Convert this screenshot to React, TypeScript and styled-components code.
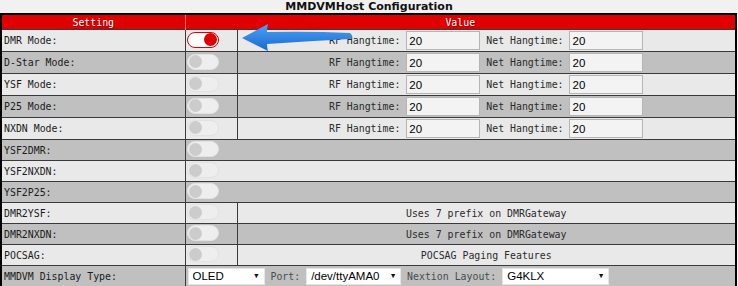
import React from "react";
import styled, { createGlobalStyle } from "styled-components";

const GlobalStyle = createGlobalStyle`
  html, body {
    margin: 0;
    padding: 0;
    background: #f1f1f1;
  }
  body {
    font-family: "DejaVu Sans Mono", monospace;
  }
`;

const Page = styled.div`
  position: relative;
  width: 738px;
  height: 286px;
  overflow: hidden;
`;

const Title = styled.div`
  font-family: "DejaVu Sans", Verdana, sans-serif;
  font-weight: bold;
  font-size: 11px;
  line-height: 13px;
  text-align: center;
  color: #111;
`;

const Table = styled.table`
  width: 737px;
  border-collapse: collapse;
  table-layout: fixed;
  border: 2px solid #000;
  font-size: 9.9px;
  color: #1b1b1b;
`;

const HeadCell = styled.th`
  background: #e10000;
  color: #fff;
  font-weight: normal;
  height: 14px;
  padding: 0;
  text-shadow: 1px 1px 1px #8a0000;
  border-right: 1px solid #f07070;
`;

const Row = styled.tr<{ $dark?: boolean }>`
  background: ${(p) => (p.$dark ? "#c0c0c0" : "#e9e9e9")};
`;

const Cell = styled.td<{ $tall?: boolean; $align?: string }>`
  border: 1px solid #3a3a3a;
  height: ${(p) => (p.$tall ? "21px" : "20px")};
  padding: 0 2px;
  text-align: ${(p) => p.$align || "left"};
  vertical-align: middle;
  white-space: nowrap;
`;

const ToggleCell = styled(Cell)`
  padding: 0 1px;
`;

const Toggle = styled.span<{ $on?: boolean }>`
  display: flex;
  justify-content: ${(p) => (p.$on ? "flex-end" : "flex-start")};
  align-items: center;
  box-sizing: border-box;
  width: 32px;
  height: 16px;
  padding: 0 1px;
  border-radius: 8px;
  border: 1px solid ${(p) => (p.$on ? "#e00000" : "#e2e2e2")};
  background: ${(p) => (p.$on ? "#fff" : "#eeeeee")};
  margin-top: -2px;
`;

const Knob = styled.span<{ $on?: boolean }>`
  width: 13px;
  height: 13px;
  border-radius: 50%;
  background: ${(p) => (p.$on ? "#e00000" : "#cccccc")};
`;

const Label = styled.span<{ $muted?: boolean }>`
  color: ${(p) => (p.$muted ? "#4a4a4a" : "#2a2a2a")};
`;

const HangInput = styled.input`
  box-sizing: border-box;
  width: 74px;
  height: 19px;
  margin: 0;
  padding: 0 2px;
  border: 1px solid #b5b5b5;
  background: #f3f3f3;
  font-family: "Liberation Sans", Arial, sans-serif;
  font-size: 11.5px;
  color: #000;
  vertical-align: middle;
`;

const SelectWrap = styled.span<{ $w: number }>`
  position: relative;
  display: inline-block;
  width: ${(p) => p.$w}px;
  vertical-align: middle;
`;

const Select = styled.select`
  appearance: none;
  box-sizing: border-box;
  width: 100%;
  height: 17px;
  margin: 0;
  padding: 0 4px;
  border: 1px solid #e6e6e6;
  border-radius: 0;
  background: #fff;
  font-family: "Liberation Sans", Arial, sans-serif;
  font-size: 11.5px;
  color: #000;
`;

const Caret = styled.span`
  position: absolute;
  right: 6px;
  top: 4px;
  font-size: 7px;
  line-height: 8px;
  color: #111;
  pointer-events: none;
`;

const Pointer = styled.svg`
  position: absolute;
  left: 240px;
  top: 22px;
`;

type Mode = { name: string; on?: boolean };

const modes: Mode[] = [
  { name: "DMR Mode:", on: true },
  { name: "D-Star Mode:" },
  { name: "YSF Mode:" },
  { name: "P25 Mode:" },
  { name: "NXDN Mode:" },
];

const bridges = ["YSF2DMR:", "YSF2NXDN:", "YSF2P25:"];

const notes = [
  { name: "DMR2YSF:", text: "Uses 7 prefix on DMRGateway" },
  { name: "DMR2NXDN:", text: "Uses 7 prefix on DMRGateway" },
  { name: "POCSAG:", text: "POCSAG Paging Features" },
];

const Switch = ({ on }: { on?: boolean }) => (
  <Toggle $on={on}>
    <Knob $on={on} />
  </Toggle>
);

const Dropdown = ({ w, value }: { w: number; value: string }) => (
  <SelectWrap $w={w}>
    <Select defaultValue={value}>
      <option>{value}</option>
    </Select>
    <Caret>▼</Caret>
  </SelectWrap>
);

export default function App() {
  let i = 0;
  return (
    <Page>
      <GlobalStyle />
      <Title>MMDVMHost Configuration</Title>
      <Table>
        <colgroup>
          <col style={{ width: 184 }} />
          <col style={{ width: 52 }} />
          <col />
        </colgroup>
        <thead>
          <tr>
            <HeadCell>Setting</HeadCell>
            <HeadCell colSpan={2}>Value</HeadCell>
          </tr>
        </thead>
        <tbody>
          {modes.map((m) => (
            <Row key={m.name} $dark={i++ % 2 === 1}>
              <Cell $tall>{m.name}</Cell>
              <ToggleCell $tall>
                <Switch on={m.on} />
              </ToggleCell>
              <Cell $tall $align="center">
                <Label>RF Hangtime: </Label>
                <HangInput defaultValue="20" />
                <Label> Net Hangtime: </Label>
                <HangInput defaultValue="20" />
              </Cell>
            </Row>
          ))}
          {bridges.map((b) => (
            <Row key={b} $dark={i++ % 2 === 1}>
              <Cell>{b}</Cell>
              <ToggleCell colSpan={2}>
                <Switch />
              </ToggleCell>
            </Row>
          ))}
          {notes.map((n) => (
            <Row key={n.name} $dark={i++ % 2 === 1}>
              <Cell>{n.name}</Cell>
              <ToggleCell>
                <Switch />
              </ToggleCell>
              <Cell $align="center">
                <Label>{n.text}</Label>
              </Cell>
            </Row>
          ))}
          <Row $dark>
            <Cell>MMDVM Display Type:</Cell>
            <Cell colSpan={2}>
              <Dropdown w={77} value="OLED" />
              <Label $muted> Port: </Label>
              <Dropdown w={95} value="/dev/ttyAMA0" />
              <Label $muted> Nextion Layout: </Label>
              <Dropdown w={107} value="G4KLX" />
            </Cell>
          </Row>
        </tbody>
      </Table>
      <Pointer width="116" height="32" viewBox="0 0 116 32">
        <defs>
          <linearGradient id="arrowFill" x1="0" y1="0" x2="0" y2="1">
            <stop offset="0" stopColor="#4ea2f4" />
            <stop offset="1" stopColor="#1768cf" />
          </linearGradient>
        </defs>
        <path
          d="M2 16 L28 2 Q27 6 27 10 Q70 9 110 11 Q114 14 110 17 Q70 19 27 22 Q27 26 28 29 Z"
          fill="url(#arrowFill)"
        />
      </Pointer>
    </Page>
  );
}
